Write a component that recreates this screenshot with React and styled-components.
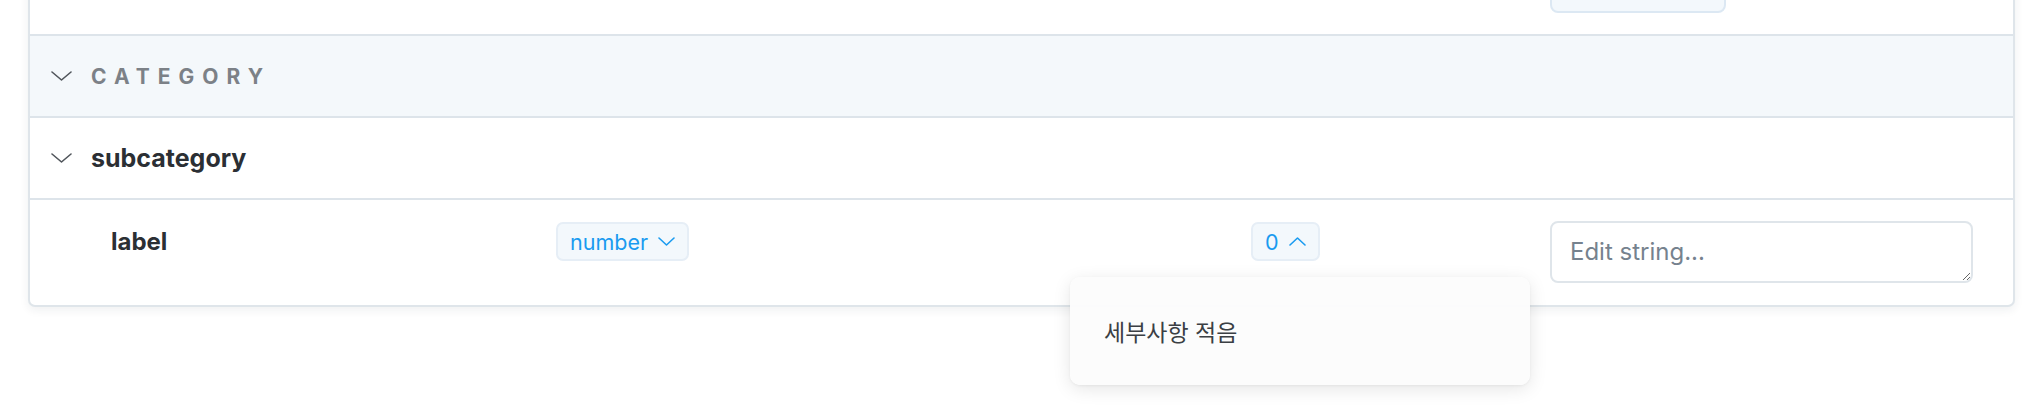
import React from 'react';
import styled, { createGlobalStyle } from 'styled-components';

const GlobalStyle = createGlobalStyle`
    html, body {
        margin: 0;
        padding: 0;
        background: #ffffff;
        font-family: Inter, "Noto Sans", "Noto Sans CJK KR", sans-serif;
    }
`

const Page = styled.div`
    box-sizing: border-box;
    min-height: 100vh;
    padding: 1px 27px 0 28px;
`

const Card = styled.div`
    margin-top: -51px;
    background: #ffffff;
    border: 2px solid #dfe5ea;
    border-radius: 7px;
    box-shadow: 0 3px 10px rgba(30, 40, 50, 0.07);
`

const FieldRow = styled.div`
    display: grid;
    grid-template-columns: 445px 695px 299px 423px;
    align-items: start;
    padding: 22px 40px ${props => props.$bottom || 20}px 81px;
    border-bottom: ${props => props.$last ? 'none' : '2px solid #dde4ea'};
`

const GroupRow = styled.div`
    display: flex;
    align-items: center;
    gap: 19px;
    height: 80px;
    padding-left: 21px;
    background: ${props => props.$section ? '#f4f8fb' : '#ffffff'};
    border-bottom: 2px solid #dde4ea;
`

const SectionTitle = styled.span`
    font-size: 21px;
    font-weight: 700;
    letter-spacing: 8px;
    text-transform: uppercase;
    color: #7c8187;
`

const GroupTitle = styled.span`
    font-size: 25px;
    font-weight: 700;
    color: #2b2f34;
`

const Label = styled.span`
    font-size: 24px;
    font-weight: 700;
    line-height: 39px;
    color: #2b2f34;
`

const Cell = styled.div`
    position: relative;
    display: flex;
`

const Badge = styled.button`
    display: inline-flex;
    align-items: center;
    gap: ${props => props.$gap || 10}px;
    height: 39px;
    padding: 0 12px;
    background: #f3f8fc;
    border: 2px solid #e6eef6;
    border-radius: 7px;
    color: #1a9bf0;
    font-family: Inter, sans-serif;
    font-size: 21.5px;
    cursor: pointer;
`

const GhostButton = styled.div`
    width: 176px;
    height: 39px;
    box-sizing: border-box;
    background: #f3f8fc;
    border: 2px solid #dce8f3;
    border-radius: 8px;
`

const TextArea = styled.textarea`
    box-sizing: border-box;
    width: 423px;
    height: 62px;
    margin: -1px 0 0;
    padding: 11px 18px 7px;
    border: 2px solid #dfe5ea;
    border-radius: 8px;
    font-family: Inter, sans-serif;
    font-size: 24px;
    line-height: 1.5;
    color: #2b2f34;
    resize: vertical;
    outline: none;
    &::placeholder {
        color: #76828e;
    }
`

const Popover = styled.div`
    position: absolute;
    top: calc(100% + 16px);
    left: -181px;
    width: 460px;
    height: 108px;
    box-sizing: border-box;
    display: flex;
    align-items: center;
    padding: 0 34px;
    background: rgba(252, 252, 252, 0.96);
    border-radius: 10px;
    box-shadow: 0 4px 18px rgba(0, 0, 0, 0.1), 0 1px 3px rgba(0, 0, 0, 0.05);
    font-family: Inter, "Noto Sans CJK KR", sans-serif;
    font-size: 23px;
    color: #3b3f44;
    z-index: 5;
`

const Chevron = ({ up, color = '#50555b', w = 21, h = 10 }) => (
    <svg width={w} height={h} viewBox={`0 0 ${w} ${h}`} fill="none">
        <polyline
            points={up ? `1,${h - 1} ${w / 2},1 ${w - 1},${h - 1}` : `1,1 ${w / 2},${h - 1} ${w - 1},1`}
            stroke={color}
            strokeWidth="1.6"
            strokeLinecap="round"
            strokeLinejoin="round"
        />
    </svg>
);

class App extends React.Component {
    render() {
        return (
            <Page>
                <GlobalStyle />
                <Card>
                    <FieldRow $bottom={21}>
                        <span />
                        <span />
                        <span />
                        <GhostButton />
                    </FieldRow>
                    <GroupRow $section>
                        <Chevron />
                        <SectionTitle>Category</SectionTitle>
                    </GroupRow>
                    <GroupRow>
                        <Chevron />
                        <GroupTitle>subcategory</GroupTitle>
                    </GroupRow>
                    <FieldRow $last $bottom={22}>
                        <Label>label</Label>
                        <Cell>
                            <Badge>
                                number
                                <Chevron color="#1a9bf0" w={17} h={9} />
                            </Badge>
                        </Cell>
                        <Cell>
                            <Badge $gap={10}>
                                0
                                <Chevron up color="#1a9bf0" w={17} h={9} />
                            </Badge>
                            <Popover>세부사항 적음</Popover>
                        </Cell>
                        <Cell>
                            <TextArea placeholder="Edit string..." />
                        </Cell>
                    </FieldRow>
                </Card>
            </Page>
        );
    }
}

export default App;
